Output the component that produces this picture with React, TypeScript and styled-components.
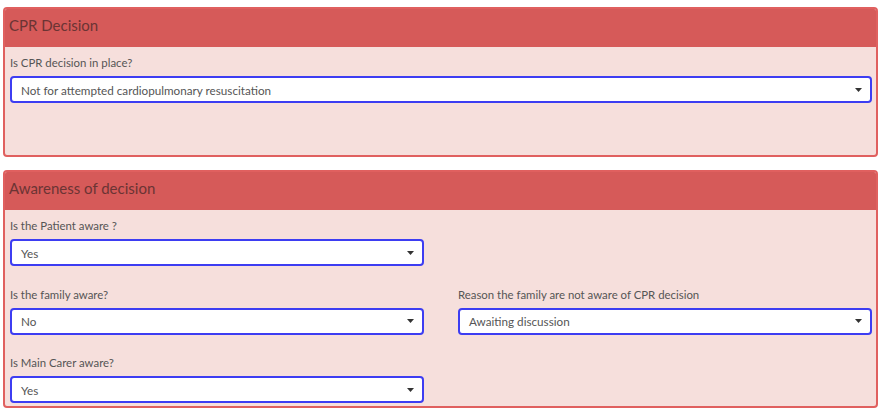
import styled, { createGlobalStyle } from 'styled-components';

const GlobalStyle = createGlobalStyle`
  body {
    margin: 0;
    background: #ffffff;
    font-family: Lato, "Open Sans", sans-serif;
  }
`;

type Field = { label: string; value: string };

const Caret = () => (
  <svg width="7" height="4" viewBox="0 0 7 4">
    <path d="M0 0 L7 0 L3.5 4 Z" fill="#333" />
  </svg>
);

const SelectBox = ({ label, value }: Field) => (
  <FieldWrap>
    <Label>{label}</Label>
    <Select>
      <span>{value}</span>
      <Caret />
    </Select>
  </FieldWrap>
);

export default function App() {
  return (
    <Page>
      <GlobalStyle />
      <Panel>
        <PanelHeader>CPR Decision</PanelHeader>
        <PanelBody minHeight={108}>
          <SelectBox
            label="Is CPR decision in place?"
            value="Not for attempted cardiopulmonary resuscitation"
          />
        </PanelBody>
      </Panel>
      <Panel>
        <PanelHeader>Awareness of decision</PanelHeader>
        <PanelBody>
          <Grid>
            <SelectBox label="Is the Patient aware ?" value="Yes" />
            <div />
            <SelectBox label="Is the family aware?" value="No" />
            <SelectBox
              label="Reason the family are not aware of CPR decision"
              value="Awaiting discussion"
            />
            <SelectBox label="Is Main Carer aware?" value="Yes" />
          </Grid>
        </PanelBody>
      </Panel>
    </Page>
  );
}

const Page = styled.div`
  display: flex;
  flex-direction: column;
  gap: 13px;
  padding: 7px 7px 0 3px;
`;

const Panel = styled.div`
  border: 2px solid #e0605f;
  border-radius: 4px;
  background: #f6dfdc;
  overflow: hidden;
`;

const PanelHeader = styled.div`
  background: #d65a59;
  color: #6b3434;
  font-size: 15px;
  height: 38px;
  line-height: 33px;
  padding-left: 4px;
`;

const PanelBody = styled.div<{ minHeight?: number }>`
  padding: 8px 4px 3px 5px;
  box-sizing: border-box;
  min-height: ${(p) => (p.minHeight ? `${p.minHeight}px` : 'auto')};
`;

const Grid = styled.div`
  display: grid;
  grid-template-columns: 414px 414px;
  column-gap: 34px;
  row-gap: 20.5px;
`;

const FieldWrap = styled.div`
  display: flex;
  flex-direction: column;
`;

const Label = styled.div`
  font-size: 11.4px;
  color: #555;
  height: 15px;
  line-height: 15px;
  margin-bottom: 6px;
`;

const Select = styled.div`
  display: flex;
  align-items: center;
  justify-content: space-between;
  height: 27px;
  box-sizing: border-box;
  border: 2px solid #3d3df2;
  border-radius: 4px;
  background: #ffffff;
  padding: 0 8px 0 9px;
  font-size: 11.7px;
  color: #555;
`;
